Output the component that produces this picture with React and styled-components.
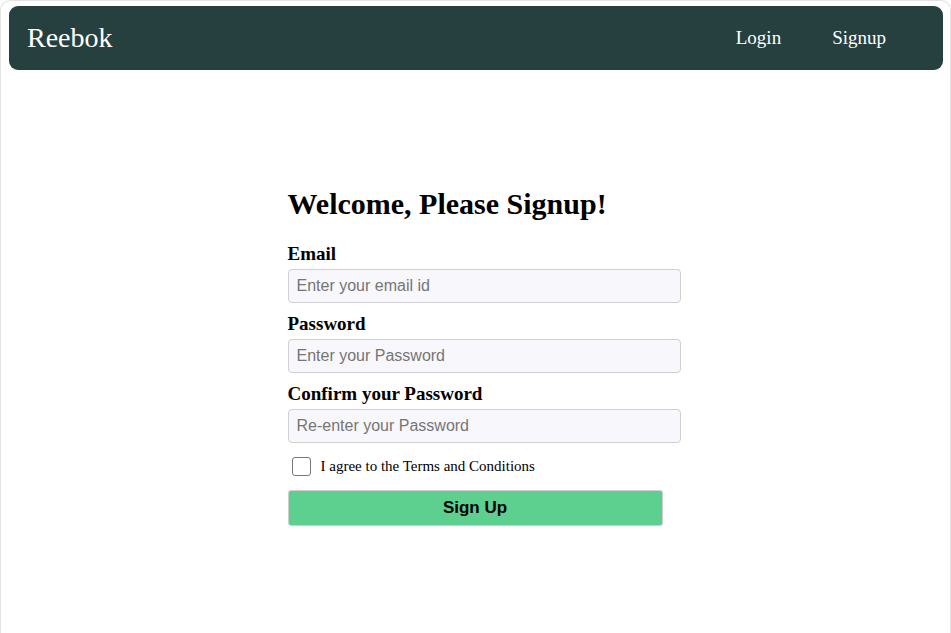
import React, { useState } from 'react';
import styled, { createGlobalStyle } from 'styled-components';

const GlobalStyle = createGlobalStyle`
  html, body {
    margin: 0;
    padding: 0;
    background: #fff;
    font-family: "Liberation Serif", "Times New Roman", serif;
  }
`;

const Frame = styled.div`
  box-sizing: border-box;
  width: 951px;
  height: 633px;
  border: 1px solid #e3e3e3;
  border-bottom: none;
  border-radius: 10px 10px 0 0;
  padding: 5px 7px 0 8px;
`;

const Navbar = styled.nav`
  display: flex;
  align-items: center;
  justify-content: space-between;
  height: 64px;
  background: #264040;
  border-radius: 9px;
  padding: 0 57px 0 18px;
  color: #fff;
`;

const Brand = styled.div`
  font-size: 28px;
`;

const NavLinks = styled.div`
  display: flex;
  gap: 51px;
`;

const NavLink = styled.a`
  font-size: 19px;
  color: #fff;
  text-decoration: none;
  cursor: pointer;
`;

const Main = styled.main`
  display: flex;
  justify-content: center;
  padding: 117px 2px 0 0;
`;

const Form = styled.form`
  width: 375px;
`;

const Title = styled.h2`
  font-size: 30px;
  font-weight: bold;
  margin: 0 0 22px;
`;

const Label = styled.label`
  display: block;
  font-size: 19px;
  font-weight: bold;
  margin-bottom: 4px;
`;

const Input = styled.input`
  display: block;
  width: 100%;
  height: 16px;
  padding: 8px;
  margin-bottom: 10px;
  border: 1px solid #cfcfd4;
  border-radius: 4px;
  background: #f8f8fc;
  font-family: "Liberation Sans", Arial, sans-serif;
  font-size: 16px;
  &::placeholder {
    color: #757575;
  }
`;

const CheckRow = styled.div`
  display: flex;
  align-items: center;
  gap: 10px;
  margin: 14px 0 14px 4px;
  font-size: 15px;
`;

const CheckBox = styled.span`
  box-sizing: border-box;
  width: 19px;
  height: 19px;
  border: 1px solid #767676;
  border-radius: 3px;
  background: ${(p) => (p.checked ? '#0075ff' : '#fff')};
  cursor: pointer;
`;

const SubmitButton = styled.button`
  box-sizing: border-box;
  width: 100%;
  height: 36px;
  border: 1px solid #cfcfcf;
  border-radius: 3px;
  background: #5dcf8f;
  font-family: "Liberation Sans", Arial, sans-serif;
  font-size: 17px;
  font-weight: bold;
  color: #000;
  cursor: pointer;
`;

const App = () => {
  const [agree, setAgree] = useState(false);

  return (
    <>
      <GlobalStyle />
      <Frame>
        <Navbar>
          <Brand>Reebok</Brand>
          <NavLinks>
            <NavLink>Login</NavLink>
            <NavLink>Signup</NavLink>
          </NavLinks>
        </Navbar>
        <Main>
          <Form onSubmit={(e) => e.preventDefault()}>
            <Title>Welcome, Please Signup!</Title>
            <Label>Email</Label>
            <Input type="email" placeholder="Enter your email id" />
            <Label>Password</Label>
            <Input type="password" placeholder="Enter your Password" />
            <Label>Confirm your Password</Label>
            <Input type="password" placeholder="Re-enter your Password" />
            <CheckRow>
              <CheckBox checked={agree} onClick={() => setAgree(!agree)} />
              <span>I agree to the Terms and Conditions</span>
            </CheckRow>
            <SubmitButton type="submit">Sign Up</SubmitButton>
          </Form>
        </Main>
      </Frame>
    </>
  );
};

export default App;
